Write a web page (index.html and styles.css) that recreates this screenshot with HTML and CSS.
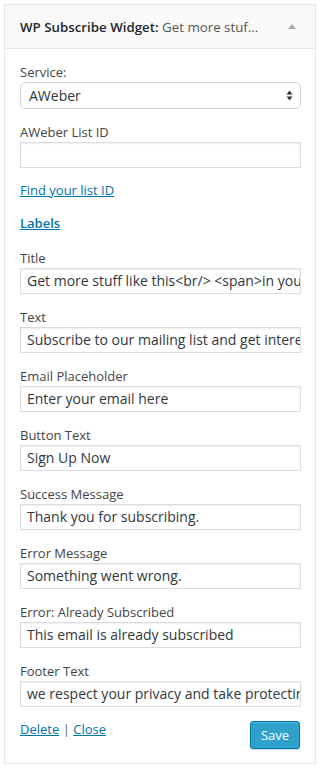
FILE: index.html
```html
<!DOCTYPE html>
<html>
<head>
<meta charset="utf-8">
<link rel="stylesheet" href="styles.css">
</head>
<body>
<div class="widget">
  <div class="widget-top">
    <h3 class="widget-title">WP Subscribe Widget:<span class="in-title"> Get more stuf...</span></h3>
    <span class="toggle"></span>
  </div>
  <div class="widget-inside">
    <p class="field">
      <label>Service:</label>
      <span class="select"><span>AWeber</span>
        <svg width="7" height="11" viewBox="0 0 7 11"><path d="M3.5 0.5 L6.5 4.5 L0.5 4.5 Z M0.5 6.5 L6.5 6.5 L3.5 10.5 Z" fill="#333"/></svg>
      </span>
    </p>
    <p class="field">
      <label>AWeber List ID</label>
      <span class="input"></span>
    </p>
    <p class="link-row"><a href="#">Find your list ID</a></p>
    <h4 class="section"><a href="#">Labels</a></h4>
    <p class="field">
      <label>Title</label>
      <span class="input">Get more stuff like this&lt;br/&gt; &lt;span&gt;in your inbox&lt;/span&gt;</span>
    </p>
    <p class="field">
      <label>Text</label>
      <span class="input">Subscribe to our mailing list and get interesting stuff</span>
    </p>
    <p class="field">
      <label>Email Placeholder</label>
      <span class="input">Enter your email here</span>
    </p>
    <p class="field">
      <label>Button Text</label>
      <span class="input">Sign Up Now</span>
    </p>
    <p class="field">
      <label>Success Message</label>
      <span class="input">Thank you for subscribing.</span>
    </p>
    <p class="field">
      <label>Error Message</label>
      <span class="input">Something went wrong.</span>
    </p>
    <p class="field">
      <label>Error: Already Subscribed</label>
      <span class="input">This email is already subscribed</span>
    </p>
    <p class="field">
      <label>Footer Text</label>
      <span class="input">we respect your privacy and take protecting it seriously</span>
    </p>
    <div class="actions">
      <div class="links"><a href="#">Delete</a> <span class="sep">|</span> <a href="#">Close</a></div>
      <button class="save">Save</button>
    </div>
  </div>
</div>
</body>
</html>
```
FILE: styles.css
```css
html, body {
  margin: 0;
  padding: 0;
  background: #fff;
}
body {
  font-family: "Open Sans", "Noto Sans", sans-serif;
  font-size: 13px;
  color: #444;
}
.widget {
  margin: 4px;
  width: 310px;
  border: 1px solid #e5e5e5;
  background: #fff;
}
.widget-top {
  height: 43px;
  border-bottom: 1px solid #e5e5e5;
  background: #f9f9f9;
  display: flex;
  align-items: center;
  padding: 0 15px;
}
.widget-title {
  margin: 0;
  flex: 1;
  min-width: 0;
  font-size: 13.3px;
  font-weight: 600;
  color: #23282d;
  white-space: nowrap;
  overflow: hidden;
}
.in-title {
  font-weight: 400;
  color: #555;
}
.toggle {
  width: 0;
  height: 0;
  border-left: 4px solid transparent;
  border-right: 4px solid transparent;
  border-bottom: 5px solid #aaa;
  margin-right: 4px;
  margin-left: 20px;
}
.widget-inside {
  padding: 1px 14px 14px 15px;
}
.field {
  margin: 13px 0;
}
.field label {
  display: block;
  line-height: 19px;
  color: #444;
}
.input {
  display: block;
  box-sizing: border-box;
  height: 26px;
  margin-top: 0;
  border: 1px solid #ddd;
  box-shadow: inset 0 1px 2px rgba(0,0,0,0.07);
  background: #fff;
  padding: 0 6px;
  font-size: 14px;
  line-height: 24px;
  color: #32373c;
  white-space: nowrap;
  overflow: hidden;
}
.select {
  display: flex;
  align-items: center;
  justify-content: space-between;
  box-sizing: border-box;
  height: 27px;
  margin-top: 0;
  border: 1px solid #d4d4d4;
  border-radius: 5px;
  background: #fff;
  padding: 0 7px 0 8px;
  font-size: 14px;
  color: #32373c;
}
.field + .field {
  margin-top: 14px;
}
.link-row {
  margin: 13px 0;
  line-height: 19px;
}
a {
  color: #0073aa;
  text-decoration: underline;
}
.section {
  margin: 14px 0 0;
  font-size: 13px;
  font-weight: 600;
  line-height: 19px;
}
.section + .field {
  margin-top: 16px;
}
.actions {
  display: flex;
  justify-content: space-between;
  align-items: flex-start;
  margin-top: 14px;
}
.links {
  line-height: 16px;
}
.sep {
  color: #666;
}
.save {
  box-sizing: border-box;
  width: 50px;
  height: 28px;
  background: #2ea2cc;
  border: 1px solid #0074a2;
  border-radius: 3px;
  box-shadow: inset 0 1px 0 rgba(120,200,230,0.5), 0 1px 0 rgba(0,0,0,0.15);
  color: #fff;
  font-family: "Open Sans", "Noto Sans", sans-serif;
  font-size: 13px;
  padding: 0;
  margin-right: 1px;
}
```
